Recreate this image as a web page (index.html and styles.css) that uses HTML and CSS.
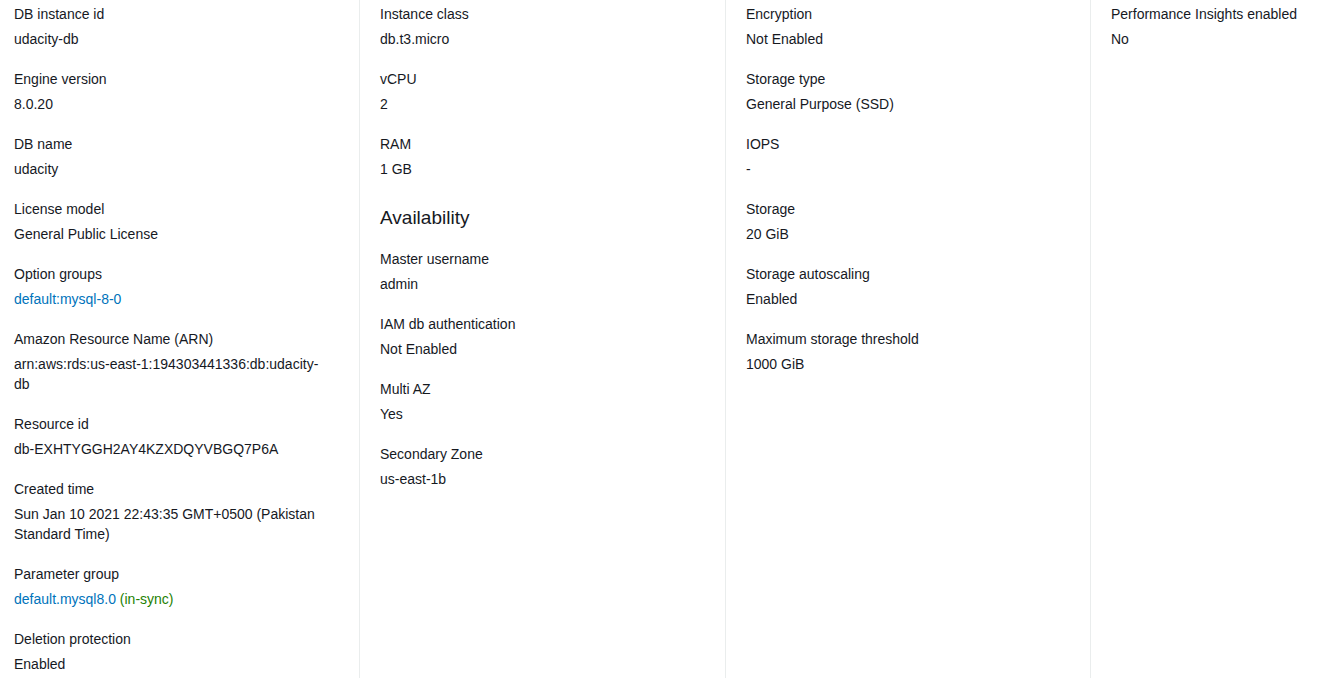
FILE: index.html
```html
<!DOCTYPE html>
<html>
<head>
<meta charset="utf-8">
<link rel="stylesheet" href="styles.css">
</head>
<body>
<div class="grid">
  <div class="col first">
    <div class="item"><div class="key">DB instance id</div><div class="val">udacity-db</div></div>
    <div class="item"><div class="key">Engine version</div><div class="val">8.0.20</div></div>
    <div class="item"><div class="key">DB name</div><div class="val">udacity</div></div>
    <div class="item"><div class="key">License model</div><div class="val">General Public License</div></div>
    <div class="item"><div class="key">Option groups</div><div class="val"><a class="link" href="#">default:mysql-8-0</a></div></div>
    <div class="item"><div class="key">Amazon Resource Name (ARN)</div><div class="val arn">arn:aws:rds:us-east-1:194303441336:db:udacity-<wbr>db</div></div>
    <div class="item"><div class="key">Resource id</div><div class="val">db-EXHTYGGH2AY4KZXDQYVBGQ7P6A</div></div>
    <div class="item"><div class="key">Created time</div><div class="val">Sun Jan 10 2021 22:43:35 GMT+0500 (Pakistan Standard Time)</div></div>
    <div class="item"><div class="key">Parameter group</div><div class="val"><a class="link" href="#">default.mysql8.0</a> <span class="ok">(in-sync)</span></div></div>
    <div class="item"><div class="key">Deletion protection</div><div class="val">Enabled</div></div>
  </div>
  <div class="col">
    <div class="item"><div class="key">Instance class</div><div class="val">db.t3.micro</div></div>
    <div class="item"><div class="key">vCPU</div><div class="val">2</div></div>
    <div class="item"><div class="key">RAM</div><div class="val">1 GB</div></div>
    <h2 class="heading">Availability</h2>
    <div class="item"><div class="key">Master username</div><div class="val">admin</div></div>
    <div class="item"><div class="key">IAM db authentication</div><div class="val">Not Enabled</div></div>
    <div class="item"><div class="key">Multi AZ</div><div class="val">Yes</div></div>
    <div class="item"><div class="key">Secondary Zone</div><div class="val">us-east-1b</div></div>
  </div>
  <div class="col">
    <div class="item"><div class="key">Encryption</div><div class="val">Not Enabled</div></div>
    <div class="item"><div class="key">Storage type</div><div class="val">General Purpose (SSD)</div></div>
    <div class="item"><div class="key">IOPS</div><div class="val">-</div></div>
    <div class="item"><div class="key">Storage</div><div class="val">20 GiB</div></div>
    <div class="item"><div class="key">Storage autoscaling</div><div class="val">Enabled</div></div>
    <div class="item"><div class="key">Maximum storage threshold</div><div class="val">1000 GiB</div></div>
  </div>
  <div class="col">
    <div class="item"><div class="key">Performance Insights enabled</div><div class="val">No</div></div>
  </div>
</div>
</body>
</html>
```

FILE: styles.css
```css
html, body {
  margin: 0;
  padding: 0;
  background: #ffffff;
}
body {
  font-family: "Liberation Sans", Arial, sans-serif;
  font-size: 14px;
  line-height: 20px;
  color: #16191f;
  width: 1340px;
  height: 678px;
  overflow: hidden;
}
.grid {
  display: grid;
  grid-template-columns: 359px 366px 365px 1fr;
  min-height: 678px;
}
.col {
  border-left: 1px solid #eaeded;
  padding: 4px 20px 0 20px;
  min-width: 0;
}
.col.first {
  border-left: none;
  padding-left: 14px;
  padding-right: 30px;
}
.item {
  margin-bottom: 20px;
}
.key {
  color: #16191f;
  margin-bottom: 5px;
}
.val {
  color: #16191f;
  overflow-wrap: break-word;
}
.link {
  color: #0073bb;
  text-decoration: none;
}
.ok {
  color: #1d8102;
}
.heading {
  font-size: 19px;
  font-weight: 400;
  line-height: 24px;
  margin: 27px 0 19px 0;
  color: #16191f;
}
```
